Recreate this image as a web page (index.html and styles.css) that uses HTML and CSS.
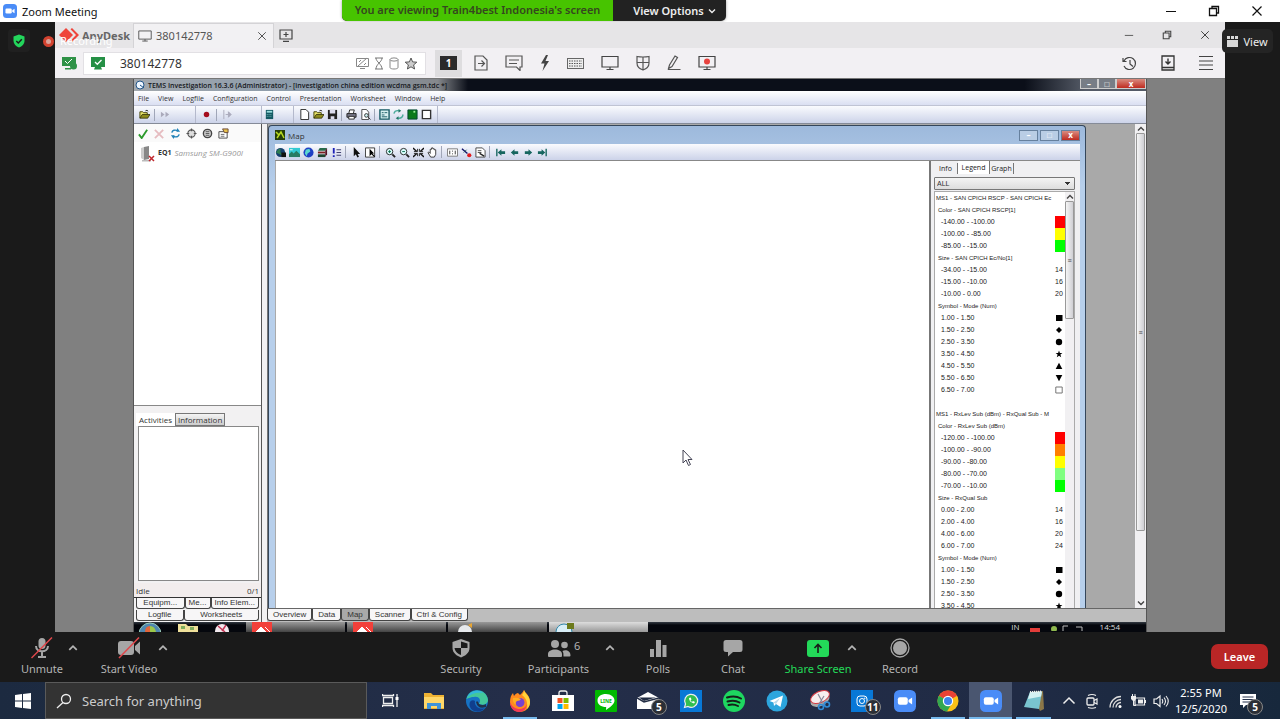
FILE: index.html
```html
<!DOCTYPE html>
<html lang="en">
<head>
    <meta charset="UTF-8">
    <meta name="viewport" content="width=device-width, initial-scale=1.0">
    <title>Zoom Meeting</title>
    <link rel="stylesheet" href="styles.css">
</head>
<body>

    <!-- shared icons -->
    <svg class="sprite" aria-hidden="true">
        <symbol id="min" viewBox="0 0 12 12"><path d="M1 6.5h10" stroke="currentColor"/></symbol>
        <symbol id="restore" viewBox="0 0 12 12"><path d="M1.5 3.500h7v7h-7zM4 3.500v-2h6.500v6.500h-2" fill="none" stroke="currentColor" stroke-width="1.300"/></symbol>
        <symbol id="close" viewBox="0 0 12 12"><path d="M1.500 1.500l9 9M10.500 1.500l-9 9" stroke="currentColor" stroke-width="1.200"/></symbol>
        <symbol id="up" viewBox="0 0 8 8"><path d="M1 5.500l3-3 3 3" fill="none" stroke="currentColor" stroke-width="1.400"/></symbol>
        <symbol id="cam" viewBox="0 0 20 20"><rect width="20" height="20" rx="5" fill="#4a8cf7"/><rect x="3.500" y="6.500" width="9" height="7" rx="1.800" fill="#fff"/><path d="M13.200 9l3.300-2.200v6.400L13.200 11z" fill="#fff"/></symbol>
        <symbol id="screen" viewBox="0 0 18 16"><path d="M1 1.500h16v10.500H1zM5.500 14.500h7M9 12v2.500" fill="none" stroke="currentColor" stroke-width="1.200"/></symbol>
        <symbol id="folder" viewBox="0 0 12 12"><path d="M1 10V3h3l1 1h4v2" fill="#e8e36a" stroke="#3c3c00"/><path d="M1 10l2.500-4H12l-2.500 4z" fill="#8d8b1c" stroke="#222200" stroke-width=".8"/><path d="M7 2q2-1.500 3 .5" fill="none" stroke="#222"/></symbol>
        <symbol id="arrow" viewBox="0 0 12 12"><path d="M2 6l4-3.500v2h4v3H6v2z" fill="#17665f"/></symbol>
        <symbol id="lens" viewBox="0 0 12 12"><circle cx="5" cy="5" r="3.500" fill="#dff" stroke="#222"/><path d="M8 8l3 3" stroke="#222" stroke-width="2"/><path d="M3.500 5h3" stroke="#064"/></symbol>
        <symbol id="pointer" viewBox="0 0 12 12"><path d="M3 0v10l2.300-2L7 11.500l1.700-.8L7.200 7.500H10z" fill="#111"/></symbol>
        <symbol id="gear" viewBox="0 0 12 12"><circle cx="6" cy="6" r="4" fill="#ddd" stroke="#555" stroke-width="1.200"/><path d="M6 .5v3M6 8.500v3M.5 6h3M8.500 6h3" stroke="#555" stroke-width="1.300"/></symbol>
        <symbol id="any" viewBox="0 0 20 14"><path d="M7 0l7 7-7 7-7-7z" fill="#ef443b"/><path d="M11.500 1.200L13 0l7 7-7 7-1.500-1.200L17 7z" fill="#ef443b"/></symbol>
        <symbol id="square" viewBox="0 0 8 8"><path d="M1 1h6.500v6H1z"/></symbol>
        <symbol id="diamond" viewBox="0 0 8 8"><path d="M4 1l3 3-3 3-3-3z"/></symbol>
        <symbol id="disc" viewBox="0 0 8 8"><circle cx="4" cy="4" r="3.200"/></symbol>
        <symbol id="star" viewBox="0 0 8 8"><path d="M4 .6l.9 2.300 2.500.1-2 1.600.8 2.600L4 5.800 1.800 7.200l.8-2.600L.6 3l2.500-.1z"/></symbol>
        <symbol id="tri" viewBox="0 0 8 8"><path d="M4 .8L7.300 7H.7z"/></symbol>
        <symbol id="tri-down" viewBox="0 0 8 8"><path d="M.7 1h6.600L4 7.200z"/></symbol>
        <symbol id="box" viewBox="0 0 8 8"><path d="M.8 1h6.400v6H.8z" fill="#fff" stroke="#777"/></symbol>
    </svg>

    <header class="titlebar">
        <div class="app-name"><svg class="i14"><use href="#cam"/></svg><span>Zoom Meeting</span></div>
        <div class="banner">
            <span class="viewing">You are viewing Train4best Indonesia's screen</span>
            <button class="view-options">View Options <svg class="i8 flip"><use href="#up"/></svg></button>
        </div>
        <div class="win-buttons">
            <button aria-label="Minimize"><svg class="i12"><use href="#min"/></svg></button>
            <button aria-label="Restore"><svg class="i12"><use href="#restore"/></svg></button>
            <button aria-label="Close"><svg class="i12"><use href="#close"/></svg></button>
        </div>
    </header>

    <main class="stage">
        <aside class="side">
            <button class="shield" aria-label="Meeting is encrypted"><svg class="i14" viewBox="0 0 14 14"><path d="M7 .5l5.500 2v4.500c0 3-2.500 5.300-5.500 6.500C4 12.300 1.500 10 1.500 7V2.500z" fill="#23d65c"/><path d="M4.300 7l2 2 3.500-3.800" fill="none" stroke="#1a1a1a" stroke-width="1.400"/></svg></button>
            <div class="rec"><i></i><span>Recording</span></div>
        </aside>

        <section class="anydesk">
            <div class="ad-tabs">
                <div class="ad-logo"><svg width="20" height="14"><use href="#any"/></svg><b>AnyDesk</b></div>
                <div class="ad-tab"><svg class="i14"><use href="#screen"/></svg><span>380142778</span><button aria-label="Close tab"><svg class="i10"><use href="#close"/></svg></button></div>
                <button class="ad-new" aria-label="New tab"><svg width="14" height="13" viewBox="0 0 14 13"><path d="M1 1h12v9H1zM7 3v5M4.500 5.500h5M4 12.300h6" fill="none" stroke="#444" stroke-width="1.200"/></svg></button>
                <div class="ad-win">
                    <button aria-label="Minimize"><svg class="i10"><use href="#min"/></svg></button>
                    <button aria-label="Restore"><svg class="i10"><use href="#restore"/></svg></button>
                    <button aria-label="Close"><svg class="i10"><use href="#close"/></svg></button>
                </div>
            </div>

            <div class="ad-bar">
                <svg class="ad-status" width="15" height="13" viewBox="0 0 15 13"><path d="M0 0h14v9H0zM3 11h6v1.500H3z" fill="#2f9247"/><path d="M3 4l2.500 2.500L10 2" fill="none" stroke="#fff"/><circle cx="11.500" cy="9" r="3.500" fill="#2f9247"/></svg>
                <div class="ad-address">
                    <svg width="14" height="13" viewBox="0 0 14 13"><path d="M0 0h14v10H0zM4 10h6l1 2.500H3z" fill="#259045"/><path d="M4 5l2.300 2.300L10.500 3" fill="none" stroke="#fff" stroke-width="1.300"/></svg>
                    <input type="text" value="380142778" aria-label="Remote address">
                    <span class="ad-marks">
                        <svg width="13" height="13" viewBox="0 0 13 13"><path d="M.5 1.500h12v8H.5zM4 11.500h5M2 9l9-8M3 5l2-2M8 8l2-2" fill="none" stroke="#888"/></svg>
                        <svg width="10" height="13" viewBox="0 0 10 13"><path d="M1 1h8M1 12h8M2 1c0 4 6 6 6 11M8 1c0 4-6 6-6 11" fill="none" stroke="#777"/></svg>
                        <svg width="10" height="13" viewBox="0 0 10 13"><path d="M1 2.500v8c0 2 8 2 8 0v-8" fill="none" stroke="#888"/><ellipse cx="5" cy="2.500" rx="4" ry="1.600" fill="none" stroke="#888"/></svg>
                        <svg width="14" height="13" viewBox="0 0 14 13"><path d="M7 1l1.600 3.900 4.200.3-3.200 2.700 1 4.100L7 9.800 3.400 12l1-4.100L1.200 5.200l4.200-.3z" fill="#ccc" stroke="#555"/></svg>
                    </span>
                </div>
                <button class="ad-num" aria-label="Display 1"><b>1</b></button>
                <div class="ad-tools">
                    <button aria-label="Transfer"><svg width="14" height="16" viewBox="0 0 14 16"><path d="M1 1h8l4 4v10H1zM4 8.500h6M7.500 5.500l3 3-3 3" fill="none" stroke="#555" stroke-width="1.200"/></svg></button>
                    <button aria-label="Chat"><svg width="18" height="16" viewBox="0 0 18 16"><path d="M1 1h16v11h-2v3.500L11.500 12H1zM4 5h10M4 8.500h8" fill="none" stroke="#555" stroke-width="1.200"/></svg></button>
                    <button aria-label="Actions"><svg width="10" height="16" viewBox="0 0 10 16"><path d="M6 0L1 8.500h3.500L2.500 16 9 6H5.500L8 0z" fill="#444"/></svg></button>
                    <button aria-label="Keyboard"><svg width="17" height="11" viewBox="0 0 17 11"><rect x=".5" y=".5" width="16" height="10" fill="#eee" stroke="#666"/><path d="M2 3h13M2 5.500h13M2 8h13" stroke="#555" stroke-dasharray="1.500 1"/></svg></button>
                    <button aria-label="Display"><svg width="18" height="16"><use href="#screen"/></svg></button>
                    <button aria-label="Permissions"><svg width="14" height="16" viewBox="0 0 14 16"><path d="M1 1.500q6 1 12 0V8c0 4-3 6-6 7-3-1-6-3-6-7zM7 2v13M1 7.500h12" fill="none" stroke="#555" stroke-width="1.200"/></svg></button>
                    <button aria-label="Whiteboard"><svg width="14" height="16" viewBox="0 0 14 16"><path d="M1.500 13.500l1-3.500L8 1l2.500 1.500L5 11.500zM1 14.500h12.500" fill="none" stroke="#555" stroke-width="1.200"/></svg></button>
                    <button aria-label="Record"><svg width="18" height="16"><use href="#screen"/><circle cx="9" cy="6.500" r="3" fill="#e8433f"/></svg></button>
                </div>
                <div class="ad-right">
                    <button aria-label="History"><svg width="15" height="15" viewBox="0 0 15 15"><path d="M2 5a6 6 0 1 1 0 5M1 2v3.500h3.500M8 4v4l3 2.500" fill="none" stroke="#444" stroke-width="1.200"/></svg></button>
                    <button aria-label="Address book"><svg width="14" height="16" viewBox="0 0 14 16"><path d="M1 1h12v14H1zM1 12.500h12" fill="none" stroke="#333" stroke-width="1.300"/><path d="M7 3.500v5M4.500 6.500L7 9l2.500-2.500" fill="none" stroke="#333" stroke-width="1.400"/></svg></button>
                    <button aria-label="Menu"><svg width="14" height="16" viewBox="0 0 14 16"><path d="M0 1.500h14M0 6h14M0 10h14M0 14.500h14" stroke="#444"/></svg></button>
                </div>
            </div>

            <div class="remote-wrap">
                <div class="remote">
                    <div class="tems-title">
                        <svg class="i10" viewBox="0 0 10 10"><circle cx="5" cy="5" r="4" fill="#eef6ff" stroke="#258"/><path d="M5 5l4 3" stroke="#258"/></svg>
                        <span>TEMS Investigation 16.3.6 (Administrator) - [investigation china edition wcdma gsm.tdc *]</span>
                        <div class="w7-buttons"><button aria-label="Minimize">&#8211;</button><button aria-label="Restore">&#9633;</button><button class="red" aria-label="Close">x</button></div>
                    </div>
                    <nav class="tems-menu">
                        <button>File</button><button>View</button><button>Logfile</button><button>Configuration</button><button>Control</button><button>Presentation</button><button>Worksheet</button><button>Window</button><button>Help</button>
                    </nav>
                    <div class="tems-tools">
                        <div class="tool-group g1"><svg><use href="#folder"/></svg><i></i><svg viewBox="0 0 12 12"><path d="M1 3l4 3-4 3zM6 3l4 3-4 3z" fill="#aab"/></svg></div>
                        <div class="tool-group g2"><svg viewBox="0 0 12 12"><circle cx="6" cy="6" r="3" fill="#a40d1d"/></svg><i></i><svg viewBox="0 0 12 12"><path d="M2 1v10M4 6h3M7 3l3 3-3 3z" fill="#aab" stroke="#aab"/></svg></div>
                        <div class="tool-group g3"><svg viewBox="0 0 12 12"><path d="M2 1h8v10H2z" fill="#155a63"/><path d="M3 2h6v2H3z" fill="#9dd"/><path d="M3 6h6M3 8h6" stroke="#7bb" stroke-dasharray="1"/></svg></div>
                        <div class="tool-group">
                            <svg viewBox="0 0 12 12"><path d="M2 .5h5.500l3 3v8H2z" fill="#fff" stroke="#222"/></svg>
                            <svg><use href="#folder"/></svg>
                            <svg viewBox="0 0 12 12"><path d="M1 1h10v10H1z" fill="#222"/><path d="M3 1h6v4H3zM4 8h4v3H4z" fill="#dde"/></svg><i></i>
                            <svg viewBox="0 0 12 12"><path d="M3 5l1-4h5l-1 4" fill="#fff" stroke="#222"/><path d="M1 5h10v4H1z" fill="#778" stroke="#222"/><path d="M3 8h6v3H3z" fill="#fff" stroke="#222"/></svg>
                            <svg viewBox="0 0 12 12"><path d="M2 .5h5l2.500 3v8H2z" fill="#fff" stroke="#444"/><circle cx="7" cy="7" r="2" fill="#cee" stroke="#333"/><path d="M8.500 8.500l3 3" stroke="#333"/></svg><i></i>
                            <svg viewBox="0 0 12 12"><path d="M1 1h10v10H1z" fill="#d6f0f0" stroke="#155a63" stroke-width="1.500"/><path d="M3 4h2M6 4h3M3 6.500h3M3 8.500h6" stroke="#155a63"/></svg>
                            <svg viewBox="0 0 12 12"><path d="M1 5q1-4 6-3M11 6q-1 5-6 4" fill="none" stroke="#4aaa9a" stroke-width="1.500"/><path d="M6 0l3 2-3 2zM6 8l-3 2 3 2z" fill="#276"/></svg>
                            <svg viewBox="0 0 12 12"><path d="M1 1h10v10H1z" fill="#0b7a1c" stroke="#043"/><path d="M7 2h2v2H7z" fill="#9e9"/></svg>
                            <svg viewBox="0 0 12 12"><path d="M1.500 1.500h9v9h-9z" fill="#fff" stroke="#333" stroke-width="1.500"/></svg>
                        </div>
                    </div>

                    <div class="tems-body">
                        <div class="equip">
                            <div class="eq-tools">
                                <svg viewBox="0 0 12 12"><path d="M1 7l3 4 6-9" fill="none" stroke="#2b9a2b" stroke-width="2"/></svg>
                                <svg viewBox="0 0 12 12"><path d="M1 2l9 9M10 2l-9 9" stroke="#e6bcc0" stroke-width="2"/></svg>
                                <svg viewBox="0 0 12 12"><path d="M2 5q1-4 7-2M10 7q-1 4-7 2" fill="none" stroke="#2383b8" stroke-width="1.600"/><path d="M8 0l3 4H7zM4 12L1 8h4z" fill="#2383b8"/></svg>
                                <svg><use href="#gear"/></svg>
                                <svg viewBox="0 0 12 12"><circle cx="6" cy="6" r="4.500" fill="#ccc" stroke="#444" stroke-width="1.500"/><path d="M4 4h4M4 6h4M4 8h4" stroke="#555"/></svg>
                                <svg viewBox="0 0 12 12"><path d="M1 4h9v7H1z" fill="#fff" stroke="#444"/><path d="M5 1h6v4H7z" fill="#e7c14c" stroke="#643"/><path d="M3 7h4M3 9h4" stroke="#666"/></svg>
                            </div>
                            <div class="eq-tree">
                                <svg width="16" height="16" viewBox="0 0 16 16"><path d="M5 1l5-1v13l-5 1z" fill="#888"/><path d="M2 2l3-1v13l-3-2z" fill="#ccc"/><path d="M3 14h9v1.500H3z" fill="#bbb"/><path d="M10 10l5 5M15 10l-5 5" stroke="#c1272d" stroke-width="1.500"/></svg>
                                <b>EQ1</b><em>Samsung SM-G900I</em>
                            </div>
                            <div class="eq-tabs"><button class="on">Activities</button><button>Information</button></div>
                            <div class="eq-list"></div>
                            <div class="eq-status"><span>Idle</span><span>0/1</span></div>
                            <div class="sheet-tabs top"><button>Equipm...</button><button>Me...</button><button>Info Elem...</button></div>
                            <div class="sheet-tabs"><button>Logfile</button><button>Worksheets</button></div>
                        </div>

                        <div class="mdi">
                            <div class="mdi-area">
                                <div class="map-window">
                                    <div class="map-title">
                                        <svg class="i10" viewBox="0 0 10 10"><path d="M0 0h10v10H0z" fill="#263f0a"/><path d="M1 2l3 3 2-3 3 6M2 8l2-3" fill="none" stroke="#b8dc22" stroke-width="1.500"/></svg>
                                        <span>Map</span>
                                        <div class="map-buttons"><button aria-label="Minimize">&#8211;</button><button aria-label="Maximize">&#9633;</button><button class="red" aria-label="Close">x</button></div>
                                    </div>
                                    <div class="map-tools">
                                        <svg viewBox="0 0 12 12"><circle cx="6" cy="6" r="5" fill="#15406f"/><path d="M1 6q3-5 5-4v4l4 4" fill="#2d7d54"/><path d="M7 6h5v5H7z" fill="#111"/></svg>
                                        <svg viewBox="0 0 12 12"><path d="M0 1h12v10H0z" fill="#33c9d2"/><path d="M0 8l3-3 2 2 3-3 4 4v3H0z" fill="#287c62"/><path d="M1 3h3" stroke="#fff"/></svg>
                                        <svg viewBox="0 0 12 12"><circle cx="6" cy="6" r="5.500" fill="#1f3fc4"/><path d="M3 3l4-1 1 3-3 2-1 3-2-3z" fill="#5ad7d0"/></svg>
                                        <svg viewBox="0 0 12 12"><path d="M3 1h8l-2 3H1z" fill="#2a6b4b"/><path d="M1 5h8v2H1z" fill="#7d2020"/><path d="M1 8h8v3H1z" fill="#1d4630"/><path d="M9 4l2-3v7l-2 3z" fill="#512"/></svg>
                                        <svg viewBox="0 0 12 12"><path d="M2 1h2v6H2zM2 9h2v2H2z" fill="#1c21b8"/><path d="M6 3h5M6 6h5M6 9h5" stroke="#336"/></svg><i></i>
                                        <svg><use href="#pointer"/></svg>
                                        <svg viewBox="0 0 12 12"><path d="M.5 1h10v10H.5z" fill="#fff" stroke="#333"/><path d="M5 2v8l2-2 3 3 1-1-3-3h2z"/></svg><i></i>
                                        <svg viewBox="0 0 12 12"><use href="#lens"/><path d="M5 3.500v3" stroke="#064"/></svg>
                                        <svg><use href="#lens"/></svg>
                                        <svg viewBox="0 0 12 12"><path d="M0 1l4 4M12 1L8 5M0 11l4-4M12 11L8 7" stroke="#111" stroke-width="1.500"/><path d="M5 2v3H1M7 2v3h4M5 10V7H1M7 10V7h4" fill="none" stroke="#222"/></svg>
                                        <svg viewBox="0 0 12 12"><path d="M4 11L1 6l1-.5 1.500 1.500V2.500h1.500V1h1.500v1H8v1h1.500v5L8 11z" fill="#fff" stroke="#222" stroke-width=".9"/></svg><i></i>
                                        <svg viewBox="0 0 12 12"><path d="M.5 2h11v8H.5z" fill="#fff" stroke="#777"/><path d="M3 4v4M6 4v1M6 7v1M9 4v4" stroke="#333"/></svg>
                                        <svg viewBox="0 0 12 12"><path d="M1 2l6 5" stroke="#116" stroke-width="1.500"/><path d="M3 6l3-3" stroke="#255"/><circle cx="9" cy="9" r="2.300" fill="#e11d1d"/></svg>
                                        <svg viewBox="0 0 12 12"><path d="M1 1h7l3 3v7H1z" fill="#fff" stroke="#444"/><path d="M3 4h4M3 6h4" stroke="#444"/><path d="M5 7l5 3" stroke="#222" stroke-width="1.500"/></svg><i></i>
                                        <svg viewBox="0 0 12 12"><path d="M2 2v8" stroke="#17665f" stroke-width="1.500"/><use href="#arrow" x="1"/></svg>
                                        <svg><use href="#arrow"/></svg>
                                        <svg class="mirror"><use href="#arrow"/></svg>
                                        <svg class="mirror" viewBox="0 0 12 12"><path d="M2 2v8" stroke="#17665f" stroke-width="1.500"/><use href="#arrow" x="1"/></svg>
                                    </div>
                                    <div class="map-content">
                                        <div class="canvas"></div>
                                        <div class="legend">
                                            <div class="lg-tabs"><button>Info</button><button class="on">Legend</button><button>Graph</button></div>
                                            <select aria-label="Legend filter"><option>ALL</option></select>
                                            <div class="lg-box">
                                                <table>
                                                    <colgroup><col><col class="mark"></colgroup>
                                                    <tr class="h1"><th colspan="2">MS1 - SAN CPICH RSCP - SAN CPICH Ec</th></tr>
                                                    <tr class="h2"><th colspan="2">Color - SAN CPICH RSCP[1]</th></tr>
                                                    <tr><td>-140.00 - -100.00</td><td class="red"></td></tr>
                                                    <tr><td>-100.00 - -85.00</td><td class="yellow"></td></tr>
                                                    <tr><td>-85.00 - -15.00</td><td class="green"></td></tr>
                                                    <tr class="h2"><th colspan="2">Size - SAN CPICH Ec/No[1]</th></tr>
                                                    <tr><td>-34.00 - -15.00</td><td>14</td></tr>
                                                    <tr><td>-15.00 - -10.00</td><td>16</td></tr>
                                                    <tr><td>-10.00 - 0.00</td><td>20</td></tr>
                                                    <tr class="h2"><th colspan="2">Symbol - Mode (Num)</th></tr>
                                                    <tr><td>1.00 - 1.50</td><td><svg><use href="#square"/></svg></td></tr>
                                                    <tr><td>1.50 - 2.50</td><td><svg><use href="#diamond"/></svg></td></tr>
                                                    <tr><td>2.50 - 3.50</td><td><svg><use href="#disc"/></svg></td></tr>
                                                    <tr><td>3.50 - 4.50</td><td><svg><use href="#star"/></svg></td></tr>
                                                    <tr><td>4.50 - 5.50</td><td><svg><use href="#tri"/></svg></td></tr>
                                                    <tr><td>5.50 - 6.50</td><td><svg><use href="#tri-down"/></svg></td></tr>
                                                    <tr><td>6.50 - 7.00</td><td><svg><use href="#box"/></svg></td></tr>
                                                    <tr><td colspan="2"></td></tr>
                                                    <tr class="h1"><th colspan="2">MS1 - RxLev Sub (dBm) - RxQual Sub - M</th></tr>
                                                    <tr class="h2"><th colspan="2">Color - RxLev Sub (dBm)</th></tr>
                                                    <tr><td>-120.00 - -100.00</td><td class="red"></td></tr>
                                                    <tr><td>-100.00 - -90.00</td><td class="orange"></td></tr>
                                                    <tr><td>-90.00 - -80.00</td><td class="yellow"></td></tr>
                                                    <tr><td>-80.00 - -70.00</td><td class="light"></td></tr>
                                                    <tr><td>-70.00 - -10.00</td><td class="green"></td></tr>
                                                    <tr class="h2"><th colspan="2">Size - RxQual Sub</th></tr>
                                                    <tr><td>0.00 - 2.00</td><td>14</td></tr>
                                                    <tr><td>2.00 - 4.00</td><td>16</td></tr>
                                                    <tr><td>4.00 - 6.00</td><td>20</td></tr>
                                                    <tr><td>6.00 - 7.00</td><td>24</td></tr>
                                                    <tr class="h2"><th colspan="2">Symbol - Mode (Num)</th></tr>
                                                    <tr><td>1.00 - 1.50</td><td><svg><use href="#square"/></svg></td></tr>
                                                    <tr><td>1.50 - 2.50</td><td><svg><use href="#diamond"/></svg></td></tr>
                                                    <tr><td>2.50 - 3.50</td><td><svg><use href="#disc"/></svg></td></tr>
                                                    <tr><td>3.50 - 4.50</td><td><svg><use href="#star"/></svg></td></tr>
                                                </table>
                                                <div class="scroll small"><svg class="i8"><use href="#up"/></svg><div class="thumb">&#8801;</div></div>
                                            </div>
                                        </div>
                                    </div>
                                </div>
                                <div class="scroll"><svg class="i8"><use href="#up"/></svg><div class="thumb">&#8801;</div><svg class="i8 flip"><use href="#up"/></svg></div>
                            </div>
                            <div class="book-tabs"><button>Overview</button><button>Data</button><button class="on">Map</button><button>Scanner</button><button>Ctrl &amp; Config</button></div>
                        </div>
                    </div>

                    <div class="w7-taskbar">
                        <svg width="24" height="10" viewBox="0 0 24 10"><circle cx="12" cy="12" r="11" fill="#4f87b0" stroke="#9cb"/><path d="M7 10q0-6 5-6v6z" fill="#e2653a"/><path d="M12 4q5 0 6 6h-6z" fill="#9cc84a"/></svg>
                        <svg width="20" height="10" viewBox="0 0 20 10"><path d="M0 2h8l2 2h10v6H0z" fill="#efe09a"/><path d="M3 4h4v3H3zM12 5h4v3h-4z" fill="#7fae5c"/></svg>
                        <svg width="16" height="10" viewBox="0 0 16 10"><circle cx="8" cy="9" r="7" fill="#f2e9ee"/><path d="M4 4l7 6M12 3l-4 6" stroke="#c33352" stroke-width="1.500"/></svg>
                        <div class="w7-task"><svg width="20" height="10" viewBox="0 0 20 10"><path d="M0 0h20v10H0z" fill="#f2403a"/><path d="M9 5l5 5-5 5-5-5zM13 5l5 5" fill="#fff" stroke="#fff"/></svg></div>
                        <div class="w7-task"><svg width="20" height="10" viewBox="0 0 20 10"><path d="M0 0h20v10H0z" fill="#f2403a"/><path d="M9 5l5 5-5 5-5-5zM13 5l5 5" fill="#fff" stroke="#fff"/></svg></div>
                        <div class="w7-task"><svg width="20" height="10" viewBox="0 0 20 10"><circle cx="11" cy="10" r="7" fill="#e6e9ec"/><path d="M14 3l4-2v5z" fill="#e8a531"/></svg></div>
                        <div class="w7-task on"><svg width="20" height="10" viewBox="0 0 20 10"><circle cx="9" cy="10" r="8" fill="#d8eef7" stroke="#38a"/><path d="M12 1h7v6h-7z" fill="#6c7a1c"/></svg></div>
                        <div class="w7-tray"><span>IN</span><i></i><svg width="40" height="8" viewBox="0 0 40 8"><circle cx="4" cy="6" r="3" fill="#8fb84f"/><path d="M13 8V3h5M26 4h6v4" fill="none" stroke="#bbb"/></svg><span>14:54</span></div>
                    </div>
                    <svg class="cursor" width="11" height="18" viewBox="0 0 11 18"><path d="M1 1v13l3-3 2.500 5.500 2-1L6 10.500h4z" fill="#fff" stroke="#445"/></svg>
                </div>
            </div>
        </section>

        <aside class="side right"><button class="view"><svg width="11" height="11" viewBox="0 0 11 11"><path d="M0 0h3v3H0zM4 0h3v3H4zM8 0h3v3H8zM0 4h11v7H0z" fill="#d8d8d8"/></svg>View</button></aside>
    </main>

    <footer class="zoom-bar">
        <div class="left">
            <button class="item mic"><svg width="22" height="22" viewBox="0 0 22 22"><rect x="7.500" y="1" width="7" height="11" rx="3.500" fill="#a6a6a6"/><path d="M5 9c0 7 12 7 12 0M11 15v4M7 20h8" fill="none" stroke="#a6a6a6" stroke-width="2"/><path d="M.5 21L21 .5" stroke="#e0474b" stroke-width="1.500"/></svg><span>Unmute</span></button>
            <button class="caret" aria-label="Audio options"><svg class="i10"><use href="#up"/></svg></button>
            <button class="item video"><svg width="24" height="22" viewBox="0 0 24 22"><rect x="1" y="4" width="16" height="14" rx="3" fill="#a6a6a6"/><path d="M18 9l5-4.500v13L18 13z" fill="#a6a6a6"/><path d="M2 21L22 .5" stroke="#e0474b" stroke-width="1.500"/></svg><span>Start Video</span></button>
            <button class="caret" aria-label="Video options"><svg class="i10"><use href="#up"/></svg></button>
        </div>
        <div class="center">
            <button class="item security"><svg width="20" height="22" viewBox="0 0 20 22"><path d="M10 2l8.500 3v6c0 5-4.500 8-8.500 9.500C6 19 1.500 16 1.500 11V5z" fill="#a6a6a6"/><path d="M10 4.500v6.500h6.500c0-1 0-3 0-4.500zM10 11H3.500c.5 3.500 3.500 6 6.500 7z" fill="#1a1a1a"/></svg><span>Security</span></button>
            <button class="item people"><span class="count">6</span><svg width="24" height="22" viewBox="0 0 24 22"><circle cx="8" cy="7" r="4" fill="#a6a6a6"/><circle cx="17.500" cy="8" r="3.300" fill="#a6a6a6"/><path d="M1 19v-2c0-6 14-6 14 0v2q0 1-1 1H2q-1 0-1-1zM16.500 19.500h6q1 0 1-1C23.500 13 18 12.500 15.500 14q1.500 2 1 5.500z" fill="#a6a6a6"/></svg><span>Participants</span></button>
            <button class="caret" aria-label="Participant options"><svg class="i10"><use href="#up"/></svg></button>
            <button class="item polls"><svg width="20" height="22" viewBox="0 0 20 22"><path d="M2 12h4v8H2zM8 3h5v17H8zM14.500 8h4v12h-4z" fill="#a6a6a6"/></svg><span>Polls</span></button>
            <button class="item chat"><svg width="20" height="22" viewBox="0 0 20 22"><path d="M3 3h14q2.500 0 2.500 2.500v7q0 2.500-2.500 2.500H10l-5 4.500V15H3Q.5 15 .5 12.500v-7Q.5 3 3 3z" fill="#a6a6a6"/></svg><span>Chat</span></button>
            <button class="item share"><svg width="22" height="22" viewBox="0 0 22 22"><rect y="3" width="22" height="17" rx="3" fill="#23d959"/><path d="M11 16V8M7.500 11L11 7.500l3.500 3.500" fill="none" stroke="#1a1a1a" stroke-width="1.600"/></svg><span>Share Screen</span></button>
            <button class="caret" aria-label="Share options"><svg class="i10"><use href="#up"/></svg></button>
            <button class="item record"><svg width="20" height="22" viewBox="0 0 20 22"><circle cx="10" cy="11" r="9" fill="none" stroke="#a6a6a6" stroke-width="1.300"/><circle cx="10" cy="11" r="7" fill="#a6a6a6"/></svg><span>Record</span></button>
        </div>
        <button class="leave">Leave</button>
    </footer>

    <div class="taskbar">
        <button class="start" aria-label="Start"><svg width="16" height="16" viewBox="0 0 16 16"><path d="M0 2l7-1v6.500H0zM8 .9L16 0v7.500H8zM0 8.500h7V15l-7-1zM8 8.500h8V16l-8-1z" fill="#fff"/></svg></button>
        <label class="search"><svg width="16" height="16" viewBox="0 0 16 16"><circle cx="10" cy="6" r="4.500" fill="none" stroke="#eee" stroke-width="1.300"/><path d="M7 9.500L1 15" stroke="#eee" stroke-width="1.300"/></svg><input type="text" placeholder="Search for anything" aria-label="Search for anything"></label>
        <button class="taskview" aria-label="Task view"><svg width="17" height="15" viewBox="0 0 17 15"><path d="M1.500 4.500h9v6h-9zM.5 1v1.500h11V1M.5 14v-1.500h11V14M15 1v13" fill="none" stroke="#eee" stroke-width="1.300"/><path d="M13.500 4h3v3h-3z" fill="#fff"/></svg></button>
        <div class="apps">
            <button aria-label="Explorer"><svg viewBox="0 0 22 22"><path d="M1 3h7l2 2h11v14H1z" fill="#eeb233"/><path d="M1 7h20v11H1z" fill="#ffd768"/><path d="M4 19v-6h14v6h-4v-3H8v3z" fill="#3f93d8"/></svg></button>
            <button aria-label="Edge"><svg viewBox="0 0 22 22"><circle cx="11" cy="11" r="11" fill="#1673c5"/><path d="M.5 9C3-3 21-2 22 10c0 4-5 6-9 4 3-5-1-8-5-7-4 0-7 2-7.500 2z" fill="#43c79b"/><path d="M1 8c3-8 12-9 16-5-6-1-12 0-16 5z" fill="#30b6df"/><path d="M9 11c-1 5 4 9 10 7-5 6-13 4-15-1-2-5 2-8 5-6z" fill="#103f8e"/><path d="M10 12q2-2 3 2 4 2 7 0v3q-8 3-10-5z" fill="#22304b"/></svg></button>
            <button class="run" aria-label="Firefox"><svg viewBox="0 0 22 22"><path d="M15 0c1 3 6 5 6 12 0 6-5 10-10 10S1 18 1 12c0-4 1-7 3-9l1 3c1-2 3-3 4-3l2 2c1-1 3-3 4-5z" fill="#ff8a1f"/><path d="M15 0c1 4 6 6 6 12 0 3-1 5-3 7 1-7-1-11-5-14 1-1 2-3 2-5z" fill="#ffd43a"/><path d="M1 12c2 5 5 6 8 7 5 0 8-2 9-5-1 6-4 8-8 8-5 0-9-4-9-10z" fill="#f23a58"/><circle cx="11" cy="12.500" r="4.500" fill="#7842cf"/><path d="M4 8q4-1 8 1-1 2-4 2-2 1-1 4-4-3-3-7z" fill="#ffad22"/></svg></button>
            <button aria-label="Store"><svg viewBox="0 0 22 22"><path d="M7 6V3q0-2 2-2h4q2 0 2 2v3" fill="none" stroke="#eee" stroke-width="1.300"/><path d="M0 5h22v16H0z" fill="#fff"/><path d="M5.500 8h5v5h-5z" fill="#f25022"/><path d="M11.500 8h5v5h-5z" fill="#7fba00"/><path d="M5.500 14h5v5h-5z" fill="#00a4ef"/><path d="M11.500 14h5v5h-5z" fill="#ffb900"/></svg></button>
            <button aria-label="Line"><svg viewBox="0 0 22 22"><rect width="22" height="22" rx="1" fill="#00b900"/><path d="M11 4c5 0 8.500 3 8.500 6.500 0 4-5 7-8.500 9.500l.2-3C6 17 2.500 14.500 2.500 10.500S6 4 11 4z" fill="#fff"/><text x="11" y="12.500" font-size="5" font-weight="700" text-anchor="middle" fill="#00b900">LINE</text></svg></button>
            <button aria-label="Mail"><svg viewBox="0 0 22 22"><path d="M0 8l11-6 11 6v11H0z" fill="#fff"/><path d="M0 8l7 4 15-4" fill="none" stroke="#222d44" stroke-width="1.500"/><path d="M2 7.500h17L7 11z" fill="#222d44"/></svg><b class="badge">5</b></button>
            <button aria-label="WhatsApp"><svg viewBox="0 0 22 22"><path d="M0 0h22v22H0z" fill="#0878d7"/><path d="M4.500 17.500l1-3.500A6.500 6.500 0 1 1 8 16.500z" fill="#31bf50" stroke="#eee" stroke-width="1.200"/><path d="M9 8q0 4 5 5.500l1-1.500-2-1-1 1q-1-.5-1.500-1.700l1-.8-.8-2z" fill="#fff"/></svg></button>
            <button aria-label="Spotify"><svg viewBox="0 0 22 22"><circle cx="11" cy="11" r="11" fill="#1ed760"/><path d="M4 7.500q8-2.500 14 1M4.500 11.500q7-2 12 1M5.500 15q5-1.500 9.500 1" fill="none" stroke="#142019" stroke-width="2" stroke-linecap="round"/></svg></button>
            <button aria-label="Telegram"><svg viewBox="0 0 22 22"><circle cx="11" cy="11" r="10.500" fill="#2ca5dd"/><path d="M3.500 11L17 5.500 14.500 17 10 14l-2 2-.5-3.500z" fill="#fff"/><path d="M7.500 12.500L14 8l-4 6" fill="#b8d9ea"/></svg></button>
            <button aria-label="Snipping tool"><svg viewBox="0 0 22 22"><ellipse cx="11" cy="10" rx="10" ry="6" fill="#aaa" transform="rotate(-25 11 10)"/><ellipse cx="11" cy="7" rx="10" ry="5.500" fill="#f6eeee" stroke="#d43b45" transform="rotate(-25 11 7)"/><path d="M9 4l6 11M15 6l-5 8" stroke="#889" stroke-width="1.200"/><circle cx="12" cy="17" r="2.500" fill="none" stroke="#318bd6" stroke-width="1.600"/><circle cx="18" cy="14.500" r="2.500" fill="none" stroke="#318bd6" stroke-width="1.600"/></svg></button>
            <button aria-label="Instagram"><svg viewBox="0 0 22 22"><path d="M0 0h22v22H0z" fill="#0878d7"/><rect x="6" y="6" width="10" height="10" rx="3" fill="none" stroke="#fff"/><circle cx="11" cy="11" r="2.500" fill="none" stroke="#fff"/><circle cx="13.800" cy="8.200" r=".7" fill="#fff"/></svg><b class="badge">11</b></button>
            <button aria-label="Zoom"><svg><use href="#cam"/></svg></button>
            <button class="run" aria-label="Chrome"><svg viewBox="0 0 22 22"><circle cx="11" cy="11" r="10.500" fill="#fbc116"/><path d="M11 11L1.900 5.700A10.500 10.500 0 0 1 20.100 5.700z" fill="#e94235"/><path d="M11 11L1.900 5.700A10.500 10.500 0 0 0 10 21.500l4.500-7.500z" fill="#31a851"/><circle cx="11" cy="11" r="5.200" fill="#fff"/><circle cx="11" cy="11" r="4" fill="#3e83ec"/></svg></button>
            <button class="run active" aria-label="Zoom meeting"><svg><use href="#cam"/></svg></button>
            <button class="run" aria-label="Notepad"><svg viewBox="0 0 22 22"><path d="M7 2l13-1 1 18-4 2z" fill="#8a7648"/><path d="M7 2l12-.5L16 19 1 17z" fill="#79c4cf"/><path d="M7 2l12-.5-1 5L5 9z" fill="#d4f1f2"/><path d="M7 2l12-.5" stroke="#eee" stroke-width="2" stroke-dasharray="1"/></svg></button>
        </div>
        <div class="tray">
            <button aria-label="Hidden icons"><svg viewBox="0 0 16 16"><path d="M2.500 10.500L8 5l5.500 5.500" fill="none" stroke="#eee" stroke-width="1.500"/></svg></button>
            <button aria-label="Meet now"><svg viewBox="0 0 16 16"><rect x="3" y="5" width="7" height="7" rx="1" fill="none" stroke="#eee" stroke-width="1.300"/><path d="M10 7.500l3-1.500v5l-3-1.500M4 2.500q4-2 8 0M4 14.500q4 1.500 8 0" fill="none" stroke="#eee" stroke-width="1.200"/></svg></button>
            <button aria-label="Network"><svg viewBox="0 0 16 16"><path d="M3 14.500A11 11 0 0 1 14 3.500M6 14.500a8 8 0 0 1 8-8M9 14.500a5 5 0 0 1 5-5" fill="none" stroke="#ddd" stroke-width="1.300"/><circle cx="13" cy="13.500" r="1.500" fill="#fff"/></svg></button>
            <button aria-label="Battery"><svg viewBox="0 0 16 16"><path d="M5 5h9.500v7H5zM15.500 7v3" fill="none" stroke="#eee" stroke-width="1.200"/><path d="M8 6.500h5v4H8zM1 3h5v3L4.500 8H3L1 6z" fill="#eee"/><path d="M2.500 1v2M5 1v2M3.500 8v4.500H6" fill="none" stroke="#eee"/></svg></button>
            <button aria-label="Volume"><svg viewBox="0 0 16 16"><path d="M1 6h2.500L7 3v10.500L3.500 10.500H1z" fill="none" stroke="#eee" stroke-width="1.200"/><path d="M9 6q1.500 2.200 0 4.500M11 4.500q3 3.700 0 7.500M13 3q4.500 5.200 0 10.500" fill="none" stroke="#eee" stroke-width="1.100"/></svg></button>
            <div class="clock"><span>2:55 PM</span><span>12/5/2020</span></div>
            <button class="notes" aria-label="Notifications"><svg viewBox="0 0 16 16"><path d="M0 1h16v11H6l-3 3v-3H0z" fill="#fff"/><path d="M2.500 4h11M2.500 6.500h11M2.500 9h8" stroke="#26334d"/></svg><b class="badge">5</b></button>
        </div>
    </div>

</body>
</html>
```
FILE: styles.css
```css
* {
    box-sizing: border-box;
}
body {
    margin: 0;
    height: 100vh;
    display: flex;
    flex-direction: column;
    overflow: hidden;
    font-family: "Noto Sans", "Open Sans", sans-serif;
    font-size: 11px;
    background: #1a1a1a;
}
button {
    border: 0;
    padding: 0;
    margin: 0;
    background: none;
    font: inherit;
    color: inherit;
    white-space: nowrap;
}
svg {
    display: block;
    flex: none;
}
.sprite {
    display: none;
}
.i8 { width: 8px; height: 8px; }
.i10 { width: 10px; height: 10px; }
.i12 { width: 12px; height: 12px; }
.i14 { width: 14px; height: 14px; }
.flip { transform: rotate(180deg); }
.mirror { transform: scaleX(-1); }

/* zoom title bar */
.titlebar {
    flex: 0 0 22px;
    display: flex;
    background: #fff;
    color: #111;
}
.app-name {
    width: 342px;
    padding-left: 3px;
    display: flex;
    align-items: center;
    gap: 5px;
}
.banner {
    height: 21px;
    display: flex;
    border-radius: 0 0 5px 5px;
    overflow: hidden;
    background: #222;
    box-shadow: 0 0 3px #999;
    font-weight: 600;
}
.viewing {
    width: 271px;
    line-height: 20px;
    text-align: center;
    white-space: nowrap;
    background: #47c400;
    color: #35471f;
}
.view-options {
    width: 113px;
    display: flex;
    justify-content: center;
    align-items: center;
    gap: 4px;
    padding-left: 18px;
    padding-right: 8px;
    color: #eee;
}
.win-buttons {
    margin-left: auto;
    display: flex;
    align-items: center;
    gap: 31px;
    padding-right: 17px;
}

/* stage */
.stage {
    flex: 1;
    min-height: 0;
    display: flex;
}
.side {
    flex: 0 0 55px;
    position: relative;
    background: #1a1a1a;
}
.shield {
    margin: 7px 0 0 8px;
    width: 22px;
    height: 23px;
    display: grid;
    place-items: center;
    border-radius: 4px;
    background: #202020;
}
.rec {
    position: absolute;
    left: 43px;
    top: 11px;
    z-index: 2;
    display: flex;
    align-items: center;
    gap: 6px;
    line-height: 16px;
    color: #fff;
}
.rec i {
    width: 11px;
    height: 11px;
    border-radius: 50%;
    border: 3px solid #d2422f;
    background: #d9a49b;
}
.view {
    position: absolute;
    right: 7px;
    top: 7px;
    width: 51px;
    height: 24px;
    display: flex;
    align-items: center;
    justify-content: center;
    gap: 5px;
    border-radius: 5px;
    background: #242424;
    color: #eee;
}

/* anydesk */
.anydesk {
    flex: 1;
    min-width: 0;
    display: flex;
    flex-direction: column;
    background: #808080;
    color: #444;
}
.ad-tabs {
    flex: 0 0 26px;
    display: flex;
    align-items: center;
    background: #e6e5e7;
}
.ad-logo {
    width: 78px;
    padding-left: 4px;
    display: flex;
    align-items: center;
    gap: 3px;
    color: #666;
}
.ad-tab {
    width: 141px;
    height: 25px;
    display: flex;
    align-items: center;
    gap: 4px;
    padding: 0 6px 0 4px;
    background: #f2f1f3;
    border: 1px solid #d4d3d6;
    border-bottom: 0;
    color: #555;
}
.ad-tab button {
    margin-left: auto;
}
.ad-new {
    margin-left: 5px;
}
.ad-win {
    margin-left: auto;
    display: flex;
    gap: 28px;
    padding-right: 15px;
}
.ad-bar {
    flex: 0 0 30px;
    display: flex;
    align-items: center;
    background: #f2f0f3;
}
.ad-status {
    margin: 0 6px 0 7px;
}
.ad-address {
    width: 343px;
    height: 23px;
    display: flex;
    align-items: center;
    gap: 15px;
    padding: 0 7px;
    background: #fff;
    border: 1px solid #e2e0e4;
}
.ad-address input {
    flex: 1;
    min-width: 0;
    border: 0;
    padding: 0;
    font: 12px "Noto Sans", sans-serif;
    color: #333;
}
.ad-marks {
    display: flex;
    gap: 5px;
}
.ad-num {
    width: 27px;
    height: 27px;
    margin-left: 9px;
    display: grid;
    place-items: center;
    background: #dedddf;
}
.ad-num b {
    width: 17px;
    height: 14px;
    background: #2b2b2b;
    color: #fff;
    font-size: 10px;
    line-height: 14px;
}
.ad-tools {
    width: 260px;
    display: flex;
    justify-content: space-between;
    align-items: center;
    margin-left: 6px;
    padding: 0 12px 0 6px;
}
.ad-right {
    margin-left: auto;
    display: flex;
    align-items: center;
    gap: 24px;
    padding-right: 12px;
}

/* remote desktop */
.remote-wrap {
    flex: 1;
    min-height: 0;
    display: flex;
    padding: 0 78px;
    border-top: 1px solid #777;
}
.remote {
    position: relative;
    flex: 1;
    min-width: 0;
    display: flex;
    flex-direction: column;
    border-left: 1px solid #555;
    border-right: 1px solid #555;
    background: #fff;
    font: 8px "Open Sans", "Noto Sans", sans-serif;
    color: #333;
}
.tems-title {
    flex: 0 0 12px;
    display: flex;
    align-items: center;
    gap: 3px;
    padding-left: 1px;
    font-size: 7px;
    font-weight: 600;
    white-space: nowrap;
    color: #16181c;
    background: linear-gradient(90deg, #a2a8ae 0, #8698aa 20%, #85888c 30%, #0b0f19 33%, #0b0f19 88%, #555b67 94%);
}
.w7-buttons {
    margin-left: auto;
    display: flex;
    align-self: flex-start;
    font-size: 8px;
    font-weight: 700;
    line-height: 9px;
    color: #fff;
}
.w7-buttons button {
    width: 18px;
    height: 10px;
    border: 1px solid #ccc;
    border-top: 0;
    background: #777d86;
}
.w7-buttons .red {
    width: 30px;
}
.w7-buttons .red,
.map-buttons .red {
    background: linear-gradient(#d98c80, #bf2b20);
}
.tems-menu {
    flex: 0 0 15px;
    display: flex;
    align-items: center;
    gap: 9px;
    padding-left: 4px;
    background: linear-gradient(#fff, #dadff2);
    border-bottom: 1px solid #c0c4d4;
    font-size: 7px;
    font-weight: 500;
}
.tems-tools,
.map-tools {
    display: flex;
    align-items: center;
    background: linear-gradient(#fafbfe, #ccd3e9);
}
.tems-tools {
    flex: 0 0 18px;
    border-bottom: 1px solid #858b98;
}
.tool-group {
    height: 100%;
    display: flex;
    align-items: center;
    gap: 4px;
    padding: 0 5px;
    border-right: 1px solid #b4b9cc;
}
.tool-group:last-child {
    gap: 3px;
}
.tool-group svg,
.map-tools svg,
.eq-tools svg {
    width: 11px;
    height: 11px;
}
.tool-group i,
.map-tools i {
    width: 2px;
    height: 12px;
    border-left: 1px solid #a0a6b8;
}
.g1 { width: 62px; }
.g2 { width: 66px; }
.g3 { width: 32px; padding-left: 2px; }
.tems-body {
    flex: 1;
    min-height: 0;
    display: flex;
    background: #f2f1f2;
}
.equip {
    flex: 0 0 128px;
    margin-right: 5px;
    display: flex;
    flex-direction: column;
    border-right: 1px solid #555;
}
.eq-tools {
    flex: 0 0 18px;
    display: flex;
    align-items: center;
    gap: 5px;
    padding-left: 4px;
    background: #fafafa;
}
.eq-tree {
    flex: 0 0 264px;
    display: flex;
    align-items: flex-start;
    gap: 3px;
    padding: 4px 5px;
    line-height: 14px;
    white-space: nowrap;
    background: #fff;
    border-bottom: 1px solid #888;
}
.eq-tree em {
    color: #999;
}
.eq-tree b {
    font-size: 7px;
}
.eq-tabs {
    display: flex;
    align-items: flex-end;
    height: 20px;
    padding-left: 2px;
    font-size: 8px;
}
.eq-tabs button {
    height: 13px;
    line-height: 11px;
    padding: 0 2px;
    border: 1px solid #777;
    background: linear-gradient(#f4f4f4, #ccc);
}
.eq-tabs .on {
    border-color: #fff;
    background: #fff;
}
.eq-list {
    flex: 1;
    margin: 0 2px 2px 4px;
    background: #fff;
    border: 1px solid #888;
}
.eq-status {
    flex: 0 0 15px;
    display: flex;
    justify-content: space-between;
    align-items: center;
    padding: 0 2px;
    background: #f2eded;
    border-bottom: 1px solid #333;
}
.sheet-tabs {
    flex: 0 0 12px;
    display: flex;
    padding: 0 2px;
}
.sheet-tabs button,
.book-tabs button {
    height: 11px;
    line-height: 10px;
    background: #f7f6f7;
    border: 1px solid #444;
    border-top: 0;
    border-radius: 0 0 3px 3px;
    font-size: 8px;
    font-family: "Liberation Sans", Arial, sans-serif;
}
.sheet-tabs button {
    flex: 1 1 44px;
}
.sheet-tabs button:last-child {
    flex: 1 1 72px;
}
.sheet-tabs.top button:last-child,
.sheet-tabs.top button:first-child {
    flex: 1 1 44px;
}
.sheet-tabs.top button:nth-child(2) {
    flex: 0 1 26px;
}
.mdi {
    flex: 1;
    min-width: 0;
    display: flex;
    flex-direction: column;
    background: #bdbdbd;
}
.mdi-area {
    flex: 1;
    min-height: 0;
    display: flex;
    justify-content: space-between;
    background: #a9a9a9;
    border-left: 1px solid #777;
    border-bottom: 1px solid #666;
}
.map-window {
    flex: 0 1 818px;
    min-width: 0;
    margin-top: 1px;
    display: flex;
    flex-direction: column;
    padding: 0 5px 0 6px;
    background: linear-gradient(#9db9dc, #b7cfeb 60px);
    border: 1px solid #34465a;
    border-bottom: 0;
    border-radius: 4px 4px 0 0;
}
.map-title {
    flex: 0 0 18px;
    display: flex;
    align-items: center;
    gap: 3px;
}
.map-buttons {
    margin-left: auto;
    display: flex;
    gap: 2px;
    font-weight: 700;
    line-height: 8px;
    color: #fff;
}
.map-buttons button {
    width: 19px;
    height: 11px;
    border: 1px solid #66809e;
    background: #b9cde5;
}
.map-tools {
    flex: 0 0 17px;
    gap: 3px;
    border-bottom: 1px solid #888;
}
.map-tools i {
    width: 3px;
}
.map-content {
    flex: 1;
    min-height: 0;
    display: flex;
}
.canvas {
    flex: 1;
    background: #fff;
    border-left: 1px solid #aaa;
}
.legend {
    flex: 0 0 151px;
    display: flex;
    flex-direction: column;
    padding: 0 5px 0 3px;
    border-left: 2px solid #777;
    background: #f0f0f2;
    color: #222;
}
.lg-tabs {
    flex: 0 0 13px;
    display: flex;
    align-items: flex-end;
    font-size: 7px;
}
.lg-tabs button {
    height: 11px;
    width: 24px;
    line-height: 10px;
    border-right: 1px solid #777;
}
.lg-tabs .on {
    width: 32px;
    height: 13px;
    background: #fff;
}
.legend select {
    flex: 0 0 13px;
    margin: 3px 0 1px;
    padding: 0 2px;
    appearance: none;
    border: 1px solid #777;
    border-radius: 1px;
    color: #333;
    font: 7px "Liberation Sans", Arial, sans-serif;
    background: linear-gradient(45deg, transparent 50%, #333 50%) right 6px center / 3px 3px no-repeat, linear-gradient(-45deg, transparent 50%, #333 50%) right 3px center / 3px 3px no-repeat, linear-gradient(#f4f4f4, #ddd);
}
.lg-box {
    flex: 1;
    min-height: 0;
    display: flex;
    overflow: hidden;
    border: 1px solid #aaa;
    border-bottom: 0;
    background: #fff;
}
.legend table {
    flex: 1;
    align-self: flex-start;
    border-collapse: collapse;
    table-layout: fixed;
    width: 100%;
    font: 7px "Liberation Sans", Arial, sans-serif;
}
.legend .mark {
    width: 10px;
}
.legend tr {
    height: 12px;
}
.legend td,
.legend th {
    padding: 0 0 0 6px;
    font-weight: 400;
    line-height: 10px;
    text-align: left;
    white-space: nowrap;
}
.legend th {
    font-size: 6px;
}
.legend .h1 th { padding-left: 1px; }
.legend .h2 th { padding-left: 3px; }
.legend td + td {
    padding: 0;
}
.legend td svg {
    width: 8px;
    height: 8px;
}
.legend .red { background: #f00; }
.legend .orange { background: #ff8000; }
.legend .yellow { background: #ff0; }
.legend .light { background: #80ff80; }
.legend .green { background: #0f0; }
.scroll {
    flex: 0 0 11px;
    display: flex;
    flex-direction: column;
    align-items: center;
    padding: 1px 0;
    background: #f1f0f2;
    color: #444;
}
.scroll .thumb {
    flex: 0 0 398px;
    width: 9px;
    margin-bottom: auto;
    display: grid;
    place-items: center;
    border: 1px solid #999;
    border-radius: 1px;
    background: linear-gradient(90deg, #f5f5f5, #cfcfd4);
    font-size: 7px;
}
.scroll.small {
    flex-basis: 9px;
}
.small .thumb {
    flex-basis: 118px;
}
.book-tabs {
    flex: 0 0 13px;
    display: flex;
}
.book-tabs button {
    height: 12px;
    padding: 0 5px;
}
.book-tabs .on {
    background: #a9a9a9;
}
.w7-taskbar {
    flex: 0 0 10px;
    display: flex;
    background: linear-gradient(#333a43, #05070d 3px);
    padding-left: 4px;
    gap: 16px;
    overflow: hidden;
}
.w7-task {
    width: 99px;
    margin-right: -14px;
    padding-left: 6px;
    background: linear-gradient(#999, #444);
}
.w7-task.on {
    background: linear-gradient(#ddd, #999);
}
.w7-tray {
    margin-left: auto;
    display: flex;
    align-items: center;
    gap: 10px;
    padding-right: 26px;
    line-height: 10px;
    color: #ddd;
}
.w7-tray i {
    width: 10px;
    height: 4px;
    align-self: flex-end;
    background: #e33d3a;
}
.cursor {
    position: absolute;
    left: 548px;
    top: 370px;
}

/* meeting controls */
.zoom-bar {
    flex: 0 0 50px;
    display: flex;
    align-items: flex-start;
    background: #1a1a1a;
    color: #b4b4b4;
}
.left,
.center {
    display: flex;
    padding-top: 5px;
}
.left {
    width: 431px;
    padding-left: 17px;
}
.item {
    position: relative;
    display: flex;
    flex-direction: column;
    align-items: center;
    line-height: 20px;
}
.item + .item,
.caret + .item {
    margin-left: 24px;
}
.caret {
    width: 16px;
    height: 22px;
    display: grid;
    place-items: center;
}
.mic { width: 50px; }
.video { width: 56px; }
.left .video { margin-left: 20px; }
.left .caret { margin-left: -2px; }
.security { width: 60px; }
.people { width: 87px; }
.polls { width: 32px; }
.chat { width: 70px; }
.share { width: 52px; color: #23d959; }
.record { width: 32px; }
.count {
    position: absolute;
    left: 59px;
    top: -1px;
}
.leave {
    width: 57px;
    height: 25px;
    margin: 12px 12px 0 auto;
    border-radius: 7px;
    background: #b92626;
    color: #fff;
    font-weight: 600;
}

/* windows taskbar */
.taskbar {
    flex: 0 0 37px;
    display: flex;
    background: linear-gradient(90deg, #1c2a40, #242e49 40%, #202b45 80%, #17283c);
    color: #fff;
}
.taskbar button {
    display: grid;
    place-items: center;
    position: relative;
}
.start {
    width: 45px;
}
.search {
    width: 322px;
    display: flex;
    align-items: center;
    gap: 10px;
    padding-left: 10px;
    background: #333;
    border: 1px solid #5a5a5a;
}
.search input {
    flex: 1;
    min-width: 0;
    padding: 0;
    border: 0;
    background: none;
    font: 13px "Noto Sans", sans-serif;
}
.search input::placeholder {
    color: #ccc;
}
.taskview {
    width: 46px;
}
.apps {
    width: 642px;
    display: grid;
    grid-template-columns: repeat(15, 1fr);
}
.apps svg {
    width: 22px;
    height: 22px;
}
.apps .run::after {
    content: "";
    position: absolute;
    left: 4px;
    right: 4px;
    bottom: 0;
    height: 2px;
    background: #76b9ed;
}
.apps .active {
    background: #4a5670;
}
.apps .active::after {
    left: 0;
    right: 0;
}
.badge {
    position: absolute;
    right: 3px;
    bottom: 4px;
    width: 16px;
    height: 16px;
    border: 1px solid #888;
    border-radius: 50%;
    background: #2b2f36;
    color: #fff;
    font-size: 10px;
    line-height: 14px;
    text-align: center;
}
.tray {
    flex: 1;
    display: flex;
    align-items: center;
    padding-left: 2px;
}
.tray svg {
    width: 16px;
    height: 16px;
}
.tray button {
    width: 23px;
    height: 37px;
}
.clock {
    width: 58px;
    display: flex;
    flex-direction: column;
    align-items: center;
    line-height: 16px;
}
.tray .notes {
    width: 36px;
}
```
